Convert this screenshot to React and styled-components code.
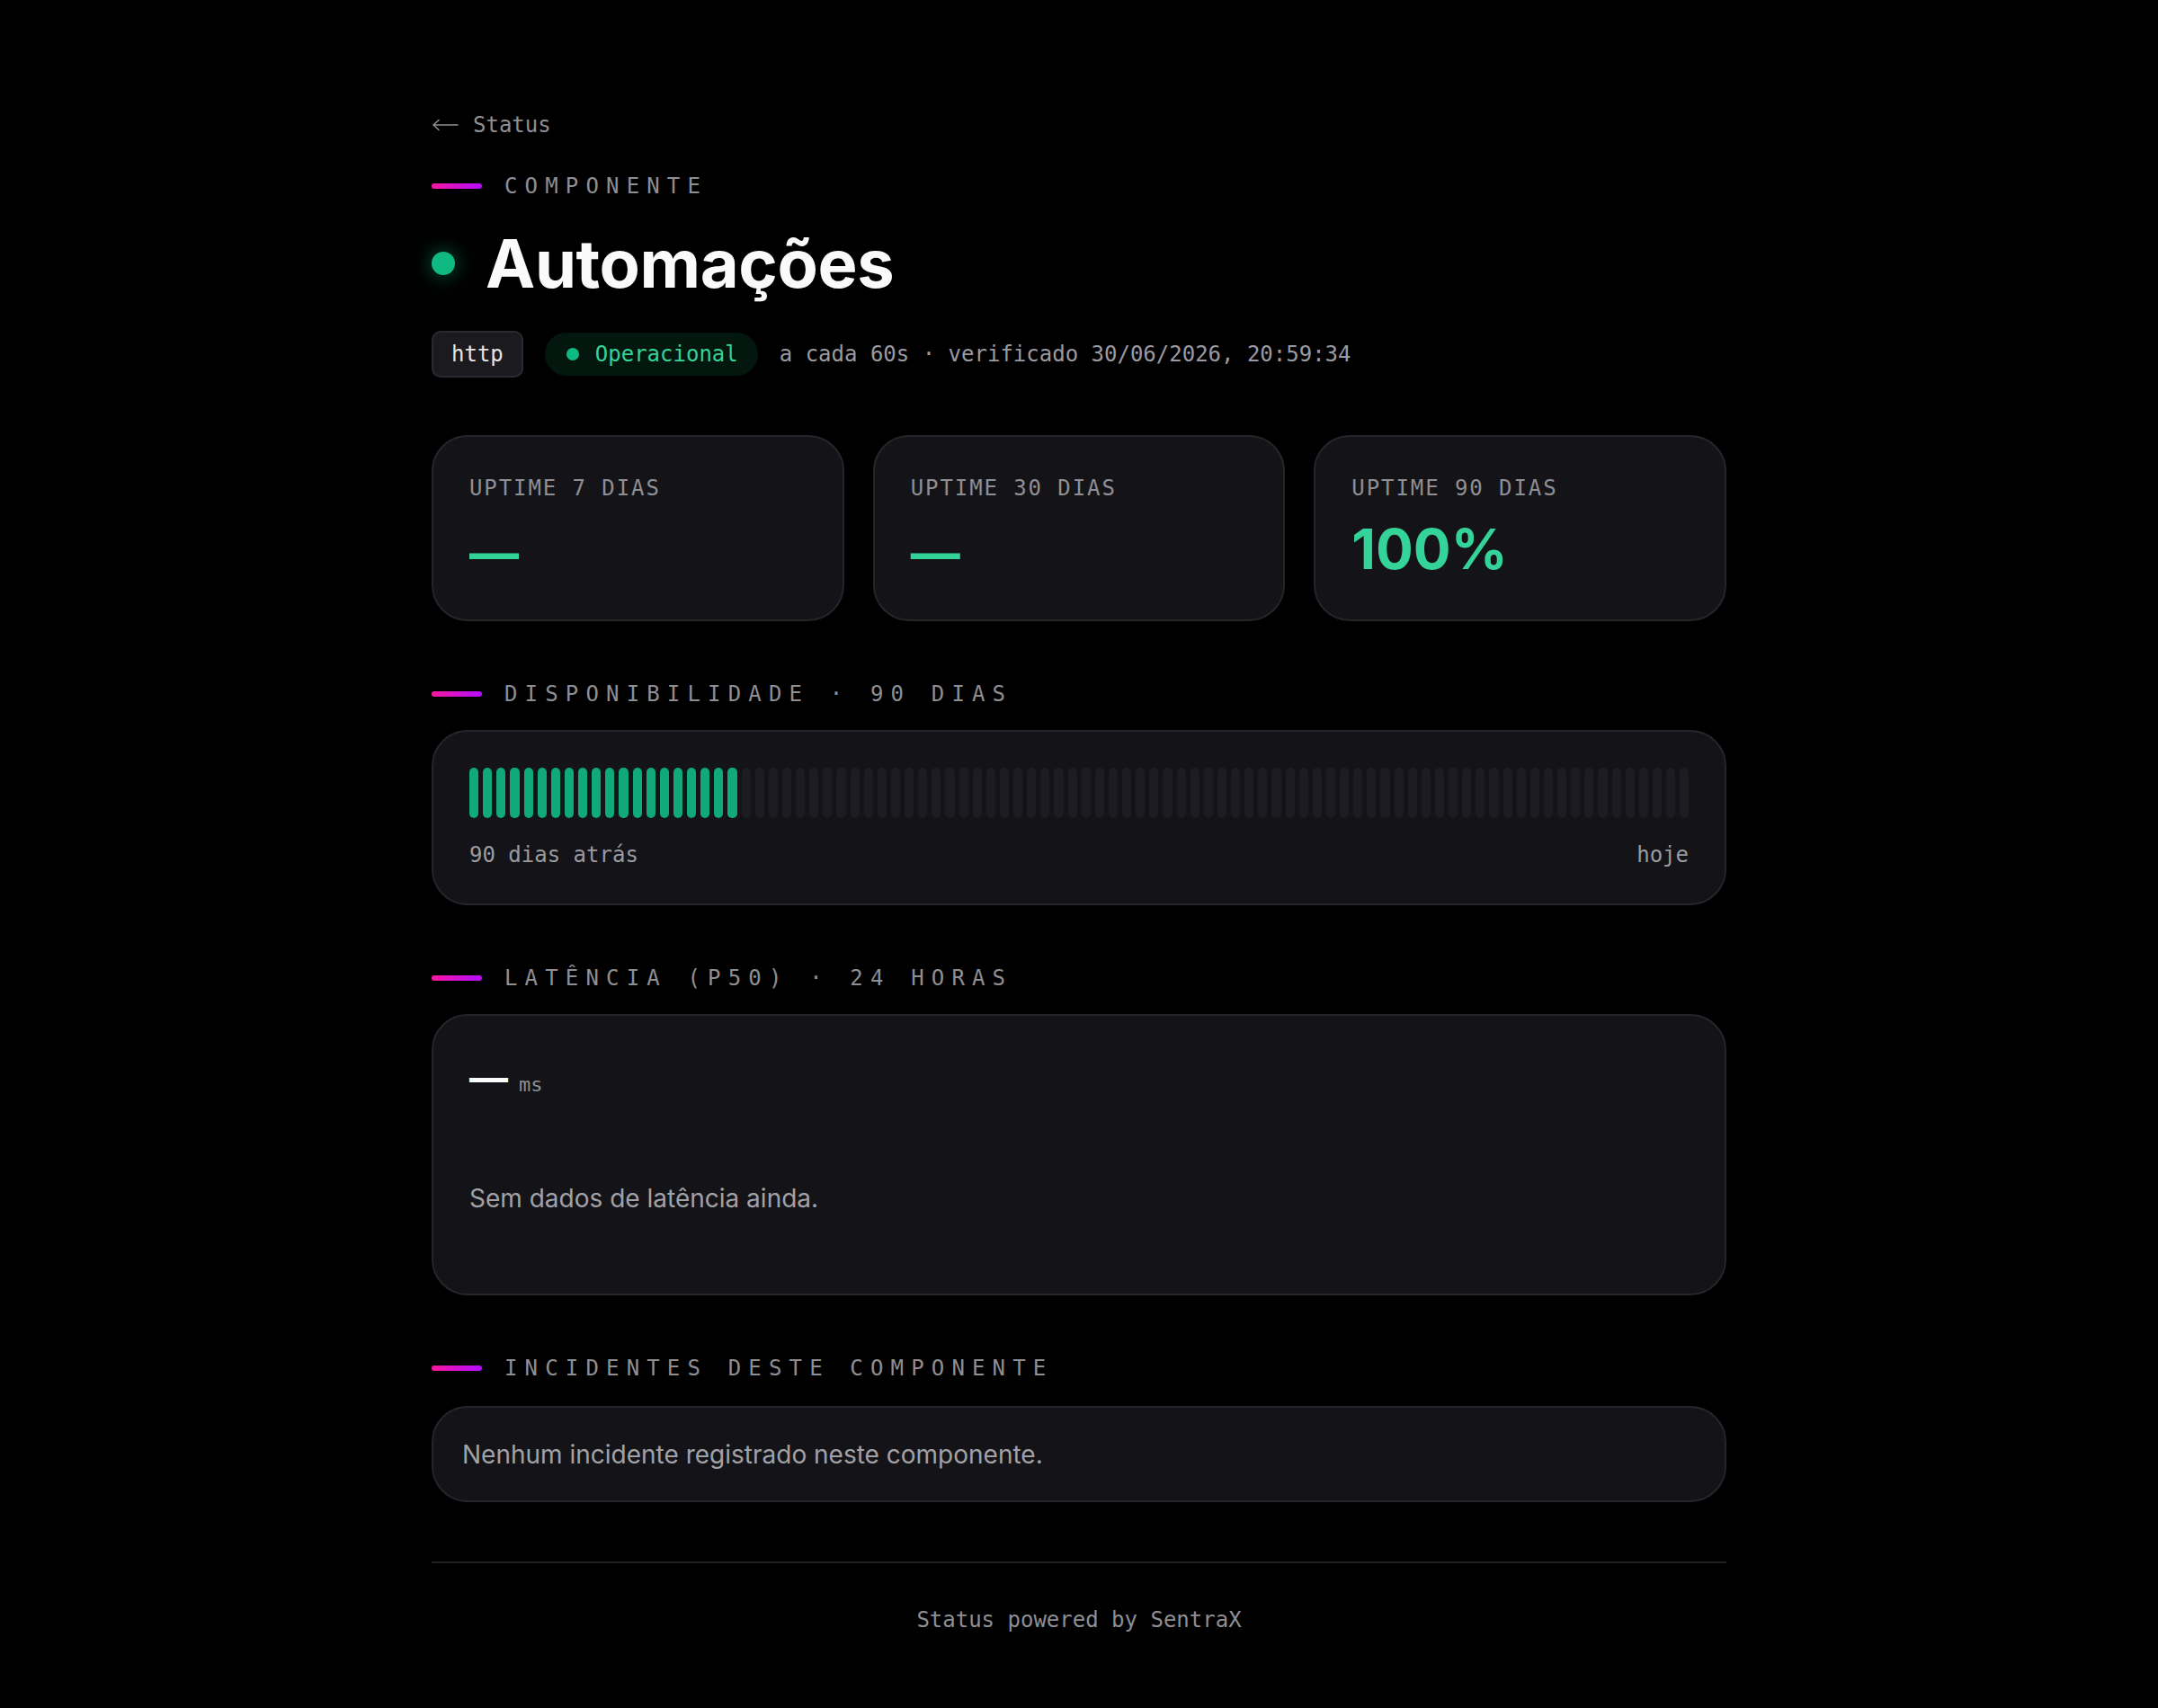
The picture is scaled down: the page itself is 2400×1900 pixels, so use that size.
import styled, { createGlobalStyle } from "styled-components";

const GlobalStyle = createGlobalStyle`
  html, body {
    margin: 0;
    background: #000;
  }
  body {
    font-family: "DejaVu Sans Mono", "Liberation Mono", monospace;
    color: #e4e4e7;
  }
`;

const Page = styled.main`
  width: 1440px;
  margin: 0 auto;
  padding: 122px 0 80px;
`;

const BackLink = styled.a`
  display: flex;
  align-items: center;
  gap: 16px;
  font-size: 24px;
  line-height: 34px;
  color: #8e8e93;
  text-decoration: none;

  & svg {
    width: 30px;
    height: 14px;
  }
`;

const SectionHeader = styled.div`
  display: flex;
  align-items: center;
  gap: 25px;
  margin-top: ${(p) => p.$mt || 0}px;
`;

const Accent = styled.span`
  width: 56px;
  height: 6px;
  border-radius: 3px;
  background: linear-gradient(90deg, #f5189e, #b40cff);
  flex-shrink: 0;
`;

const SectionLabel = styled.h2`
  margin: 0;
  font-size: 24px;
  font-weight: 400;
  line-height: 34px;
  letter-spacing: 0.34em;
  text-transform: uppercase;
  color: #8e8e93;
`;

const TitleRow = styled.div`
  display: flex;
  align-items: center;
  gap: 34px;
  margin-top: 29px;
`;

const StatusDot = styled.span`
  width: ${(p) => p.$size}px;
  height: ${(p) => p.$size}px;
  border-radius: 50%;
  background: #10b981;
  flex-shrink: 0;
  box-shadow: ${(p) => (p.$glow ? "0 0 22px rgba(16, 185, 129, 0.55)" : "none")};
`;

const Title = styled.h1`
  margin: 0;
  font-family: Inter, "Noto Sans", sans-serif;
  font-size: 74px;
  font-weight: 700;
  line-height: 80px;
  letter-spacing: -0.005em;
  color: #fafafa;
`;

const MetaRow = styled.div`
  display: flex;
  align-items: center;
  gap: 24px;
  margin-top: 35px;
  font-size: 24px;
`;

const TypeBadge = styled.span`
  box-sizing: border-box;
  height: 52px;
  display: flex;
  align-items: center;
  padding: 0 20px;
  background: #1a1a1f;
  border: 2px solid #2a2a30;
  border-radius: 10px;
  color: #e4e4e7;
`;

const StatusPill = styled.span`
  height: 48px;
  display: flex;
  align-items: center;
  gap: 18px;
  padding: 0 22px 0 24px;
  border-radius: 24px;
  background: #04170f;
  color: #34d399;
`;

const MetaText = styled.span`
  color: #9a9aa0;
`;

const StatGrid = styled.div`
  display: grid;
  grid-template-columns: repeat(3, 1fr);
  gap: 32px;
  margin-top: 64px;
`;

const Card = styled.div`
  box-sizing: border-box;
  background: #141418;
  border: 2px solid #25252a;
  border-radius: 40px;
`;

const StatCard = styled(Card)`
  height: 207px;
  padding: 40px 40px 40px;
`;

const StatLabel = styled.div`
  font-size: 24px;
  line-height: 34px;
  letter-spacing: 0.08em;
  color: #8e8e93;
`;

const StatValue = styled.div`
  margin-top: 14px;
  font-family: Inter, "Noto Sans", sans-serif;
  font-size: 62px;
  font-weight: 700;
  line-height: 74px;
  color: #34d399;
`;

const ValueDash = styled.span`
  font-size: 55px;
  vertical-align: -2px;
`;

const Section = styled.section`
  margin-top: 64px;
`;

const Panel = styled(Card)`
  margin-top: 23px;
  padding: 40px;
`;

const BarsPanel = styled(Panel)`
  padding-bottom: 37px;
`;

const Bars = styled.div`
  display: flex;
  gap: 5px;
  height: 56px;
`;

const Bar = styled.span`
  flex: 1;
  border-radius: 5px;
  background: ${(p) => (p.$up ? "#11a97a" : "#1c1c22")};
`;

const BarLegend = styled.div`
  display: flex;
  justify-content: space-between;
  margin-top: 24px;
  font-size: 24px;
  line-height: 34px;
  color: #9a9aa0;
`;

const LatencyPanel = styled(Panel)`
  padding-bottom: 86px;
`;

const LatencyValue = styled.div`
  display: flex;
  align-items: baseline;
  gap: 12px;
  height: 56px;
`;

const BigDash = styled.span`
  font-family: Inter, "Noto Sans", sans-serif;
  font-size: 43px;
  font-weight: 700;
  line-height: 56px;
  color: #fafafa;
`;

const Unit = styled.span`
  font-size: 22px;
  color: #8e8e93;
`;

const EmptyText = styled.p`
  margin: ${(p) => p.$mt || 0}px 0 0;
  font-family: Inter, "Noto Sans", sans-serif;
  font-size: 28px;
  line-height: 40px;
  color: #a1a1a6;
`;

const IncidentPanel = styled(Card)`
  margin-top: 25px;
  padding: 32px 32px 31px;
`;

const Footer = styled.footer`
  margin-top: 66px;
  padding-top: 46px;
  border-top: 2px solid #222226;
  text-align: center;
  font-size: 24px;
  line-height: 34px;
  color: #8e8e93;
`;

const days = Array.from({ length: 90 }, (_, i) => i < 20);

function Header({ children, mt }) {
  return (
    <SectionHeader $mt={mt}>
      <Accent />
      <SectionLabel>{children}</SectionLabel>
    </SectionHeader>
  );
}

function Stat({ label, value }) {
  return (
    <StatCard>
      <StatLabel>{label}</StatLabel>
      <StatValue>{value == null ? <ValueDash>—</ValueDash> : value}</StatValue>
    </StatCard>
  );
}

export default function App() {
  return (
    <>
      <GlobalStyle />
      <Page>
        <BackLink href="#">
          <svg viewBox="0 0 30 14" fill="none" stroke="currentColor" strokeWidth="1.6" strokeLinecap="round" strokeLinejoin="round">
            <path d="M29 7H2M8 1.5L2 7l6 5.5" />
          </svg>
          Status
        </BackLink>

        <Header mt={34}>Componente</Header>

        <TitleRow>
          <StatusDot $size={26} $glow />
          <Title>Automações</Title>
        </TitleRow>

        <MetaRow>
          <TypeBadge>http</TypeBadge>
          <StatusPill>
            <StatusDot $size={14} />
            Operacional
          </StatusPill>
          <MetaText>a cada 60s · verificado 30/06/2026, 20:59:34</MetaText>
        </MetaRow>

        <StatGrid>
          <Stat label="UPTIME 7 DIAS" />
          <Stat label="UPTIME 30 DIAS" />
          <Stat label="UPTIME 90 DIAS" value="100%" />
        </StatGrid>

        <Section>
          <Header>Disponibilidade · 90 dias</Header>
          <BarsPanel>
            <Bars>
              {days.map((up, i) => (
                <Bar key={i} $up={up} />
              ))}
            </Bars>
            <BarLegend>
              <span>90 dias atrás</span>
              <span>hoje</span>
            </BarLegend>
          </BarsPanel>
        </Section>

        <Section>
          <Header>Latência (P50) · 24 horas</Header>
          <LatencyPanel>
            <LatencyValue>
              <BigDash>—</BigDash>
              <Unit>ms</Unit>
            </LatencyValue>
            <EmptyText $mt={87}>Sem dados de latência ainda.</EmptyText>
          </LatencyPanel>
        </Section>

        <Section>
          <Header>Incidentes deste componente</Header>
          <IncidentPanel>
            <EmptyText>Nenhum incidente registrado neste componente.</EmptyText>
          </IncidentPanel>
        </Section>

        <Footer>Status powered by SentraX</Footer>
      </Page>
    </>
  );
}
